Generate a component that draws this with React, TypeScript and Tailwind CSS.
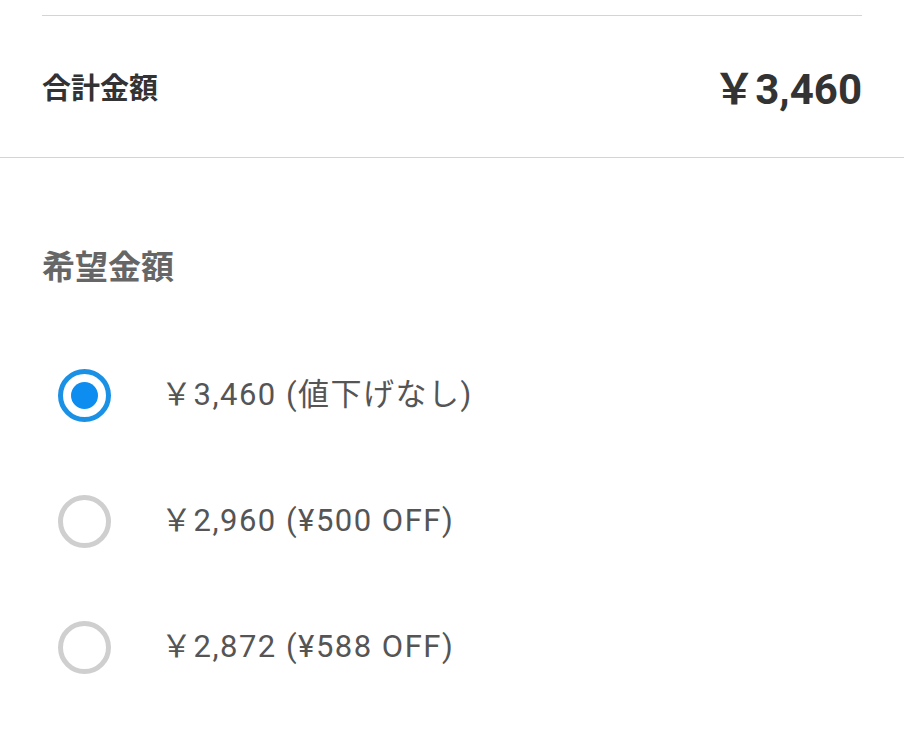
const options = [
  { label: "￥3,460 (値下げなし)", checked: true },
  { label: "￥2,960 (¥500 OFF)", checked: false },
  { label: "￥2,872 (¥588 OFF)", checked: false },
];

function Radio({ checked }: { checked: boolean }) {
  if (checked) {
    return (
      <span className="flex h-[53px] w-[53px] shrink-0 items-center justify-center rounded-full border-[5px] border-[#1b91e6]">
        <span className="h-[27px] w-[27px] rounded-full bg-[#0d8df0]" />
      </span>
    );
  }
  return (
    <span className="h-[53px] w-[53px] shrink-0 rounded-full border-[5px] border-[#cfcfcf]" />
  );
}

export default function App() {
  return (
    <div className="min-h-screen bg-white font-['Roboto','Noto_Sans_CJK_JP',sans-serif]">
      <div className="mx-[42px] pt-[15px]">
        <div className="border-t border-[#d4d4d4]" />
        <div className="flex h-[141px] items-center justify-between pt-[6px]">
          <span className="text-[29px] font-bold text-[#333]">合計金額</span>
          <span className="text-[42px] font-bold text-[#333]">￥3,460</span>
        </div>
      </div>
      <div className="border-t border-[#d4d4d4]" />

      <div className="mx-[42px]">
        <h2 className="mt-[90px] text-[33px] leading-[40px] font-bold text-[#666]">
          希望金額
        </h2>
        <ul className="mt-[44px]">
          {options.map((o) => (
            <li key={o.label} className="flex h-[126px] items-center gap-[50px] pl-[16px]">
              <Radio checked={o.checked} />
              <span className="text-[31px] tracking-[1.5px] text-[#555]">{o.label}</span>
            </li>
          ))}
        </ul>
      </div>
    </div>
  );
}
